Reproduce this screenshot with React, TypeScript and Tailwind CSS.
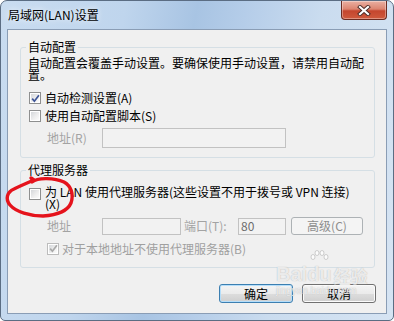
import React from "react";

const FONT = "font-['Noto_Sans_CJK_SC','Noto_Sans',sans-serif]";

function CheckBox({ checked, disabled }: { checked?: boolean; disabled?: boolean }) {
  return (
    <span
      className={`flex h-[12px] w-[12px] shrink-0 items-center justify-center border ${
        disabled ? "border-[#bcbcbc]" : "border-[#8e8f8f]"
      } bg-[linear-gradient(135deg,#cfd2d6,#eeeeee_55%,#ffffff)] shadow-[inset_0_0_0_1px_#ffffff]`}
    >
      {checked && (
        <svg width="9" height="9" viewBox="0 0 9 9">
          <path
            d="M1.2 4.6 L3.4 7.2 L7.9 1.2"
            stroke={disabled ? "#a9a9a9" : "#3e5597"}
            strokeWidth="1.7"
            fill="none"
          />
        </svg>
      )}
    </span>
  );
}

function CloseButton() {
  return (
    <div className="flex h-[19px] w-[46px] items-center justify-center rounded-b-[4px] border border-t-0 border-[#6b2c22] bg-[linear-gradient(180deg,#eab0a2_0%,#dc8470_45%,#c4462e_55%,#cf5a3d_100%)] shadow-[inset_0_0_0_1px_rgba(255,255,255,0.35)]">
      <svg width="14" height="11" viewBox="0 0 14 11">
        <path d="M3 2 L11 9 M11 2 L3 9" stroke="#4a2b26" strokeWidth="4" strokeLinecap="square" />
        <path d="M3 2 L11 9 M11 2 L3 9" stroke="#ffffff" strokeWidth="2.2" strokeLinecap="square" />
      </svg>
    </div>
  );
}

function WinButton({ label, focused }: { label: string; focused?: boolean }) {
  return (
    <div
      className={`flex h-[19px] w-[74px] items-center justify-center rounded-[3px] border text-[12px] leading-none text-black ${
        focused
          ? "border-[#3c7fb1] shadow-[inset_0_0_0_1px_#b5defa]"
          : "border-[#707070] shadow-[inset_0_0_0_1px_#fbfbfb]"
      } bg-[linear-gradient(180deg,#f4f4f4_0%,#ebebeb_50%,#dddddd_51%,#cfcfcf_100%)]`}
    >
      {label}
    </div>
  );
}

function Group({ title, children, className = "" }: { title: string; children: React.ReactNode; className?: string }) {
  return (
    <fieldset className={`ml-[12px] mr-[11px] rounded-[3px] border border-[#d5dfe5] pl-[7px] ${className}`}>
      <legend className="-ml-[2px] px-[2px] text-[12px] leading-[14px] text-black">{title}</legend>
      {children}
    </fieldset>
  );
}

export default function App() {
  return (
    <div className={`relative h-[321px] w-[394px] overflow-hidden bg-white ${FONT}`}>
      <div className="flex h-full flex-col rounded-t-[7px] rounded-b-[5px] border border-[#5b6d83] bg-[linear-gradient(100deg,#c9dcf0_0%,#bfd5ed_28%,#a8c4e3_44%,#b5cde9_55%,#cadcef_72%,#d6e4f3_100%)] px-[6px] pb-[6px]">
        {/* title bar */}
        <div className="flex h-[28px] items-start justify-between">
          <span className="ml-[1px] mt-[7px] text-[12px] leading-[14px] text-black [text-shadow:0_0_6px_#ffffff]">
            局域网(LAN)设置
          </span>
          <CloseButton />
        </div>

        {/* client area */}
        <div className="flex flex-1 flex-col border border-[#8a9db5] bg-[#f0f0f0] text-[12px] text-black">
          <Group title="自动配置" className="mt-[10px] pb-[9px]">
            <p className="mt-[3px] whitespace-nowrap leading-[12px]">
              <span className="block">自动配置会覆盖手动设置。要确保使用手动设置，请禁用自动配</span>
              <span className="block">置。</span>
            </p>
            <div className="ml-[1px] mt-[8px] flex h-[18px] items-center gap-[4px]">
              <CheckBox checked />
              <span className="leading-none">自动检测设置(A)</span>
            </div>
            <div className="ml-[1px] flex h-[18px] items-center gap-[4px]">
              <CheckBox />
              <span className="leading-none">使用自动配置脚本(S)</span>
            </div>
            <div className="mt-[3px] flex h-[20px] items-center">
              <span className="ml-[19px] w-[55px] leading-none text-[#a3a3a3]">地址(R)</span>
              <div className="h-[20px] w-[184px] border border-[#c2c2c2] bg-[#f2f2f2]" />
            </div>
          </Group>

          <Group title="代理服务器" className="mt-[5px] pb-[10px]">
            <div className="ml-[1px] mt-[9px] flex items-start gap-[4px]">
              <span className="mt-[2px]">
                <CheckBox />
              </span>
              <span className="whitespace-nowrap leading-[12px]">
                <span className="block">为 LAN 使用代理服务器(这些设置不用于拨号或 VPN 连接)</span>
                <span className="block">(X)</span>
              </span>
            </div>
            <div className="mt-[7px] flex h-[18px] items-center">
              <span className="ml-[19px] w-[55px] leading-none text-[#a3a3a3]">地址</span>
              <div className="h-[17px] w-[79px] border border-[#c2c2c2] bg-[#f2f2f2]" />
              <span className="ml-[3px] w-[54px] leading-none text-[#a3a3a3]">端口(T):</span>
              <div className="flex h-[17px] w-[48px] items-center border border-[#c2c2c2] bg-[#f2f2f2] pl-[2px] leading-none text-[#6d6d6d]">
                80
              </div>
              <div className="ml-[5px] flex h-[18px] w-[72px] items-center justify-center rounded-[3px] border border-[#adb2b5] bg-[#f4f4f4] leading-none text-[#8d8d8d]">
                高级(C)
              </div>
            </div>
            <div className="mt-[5px] flex h-[17px] items-center gap-[3px] pl-[19px]">
              <CheckBox checked disabled />
              <span className="leading-none text-[#a0a0a0]">对于本地地址不使用代理服务器(B)</span>
            </div>
          </Group>

          <div className="mr-[10px] mt-[16px] flex justify-end gap-[9px]">
            <WinButton label="确定" focused />
            <WinButton label="取消" />
          </div>
        </div>
      </div>

      {/* red hand-drawn circle */}
      <svg className="pointer-events-none absolute left-0 top-0" width="394" height="321">
        <path
          d="M32 182 C38 177, 55 178, 64 182 C71 186, 74 194, 71 203 C68 210, 58 215, 43 216 C30 216, 16 212, 10 205 C5 199, 7 192, 14 189 C20 186, 27 183, 34 180 L31 178"
          stroke="#e5131c"
          strokeWidth="3.4"
          fill="none"
          strokeLinecap="round"
          strokeLinejoin="round"
        />
      </svg>

      {/* watermark */}
      <div className="pointer-events-none absolute left-[276px] top-[264px] flex flex-col items-start text-white/75 [text-shadow:0_0_1px_#a8a8a8]">
        <div className="flex items-end font-['Liberation_Sans',sans-serif] text-[20px] font-bold leading-none">
          <span>Bai</span>
          <span className="relative">
            du
            <svg className="absolute -top-[14px] left-[2px]" width="20" height="14" viewBox="0 0 20 14">
              <g fill="rgba(255,255,255,0.8)" stroke="#b0b0b0" strokeWidth="0.6">
                <ellipse cx="4" cy="7" rx="2" ry="2.5" />
                <ellipse cx="8" cy="3" rx="2" ry="2.5" />
                <ellipse cx="13" cy="3" rx="2" ry="2.5" />
                <ellipse cx="17" cy="7" rx="2" ry="2.5" />
              </g>
            </svg>
          </span>
          <span className={`ml-[2px] text-[17px] ${FONT}`}>经验</span>
        </div>
        <span className="mt-[2px] font-['Liberation_Sans',sans-serif] text-[10px] leading-none">jingyan.baidu.com</span>
      </div>
    </div>
  );
}
